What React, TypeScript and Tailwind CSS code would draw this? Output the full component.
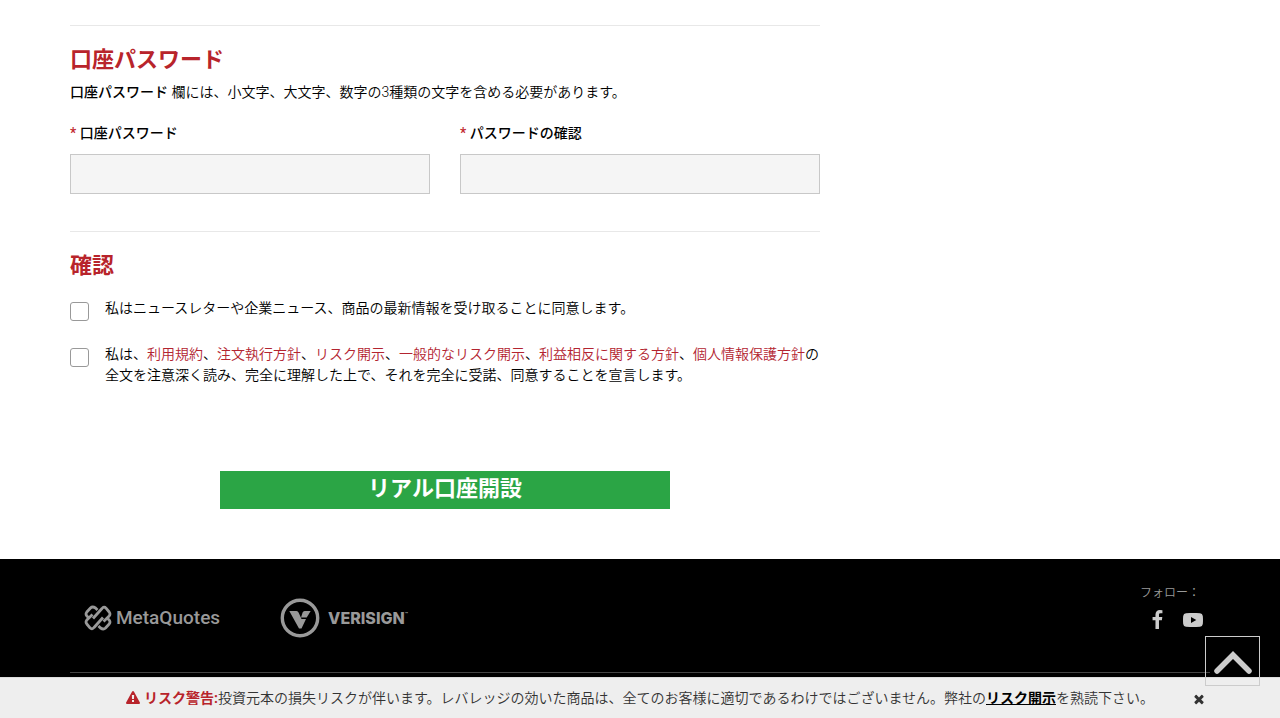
import React from "react";

function Field({ id, label }: { id: string; label: string }) {
  return (
    <div className="flex flex-1 flex-col gap-[10px]">
      <label htmlFor={id} className="font-medium">
        <span className="text-[#c1272d]">*</span> {label}
      </label>
      <input
        id={id}
        type="password"
        className="h-10 w-full border border-[#c8c8c8] bg-[#f5f5f5] px-3 outline-none"
      />
    </div>
  );
}

function Consent({ id, children }: { id: string; children: React.ReactNode }) {
  return (
    <div className="flex items-start gap-4">
      <input
        id={id}
        type="checkbox"
        className="mt-1 size-[19px] shrink-0 appearance-none rounded-[3px] border border-[#999] bg-white checked:bg-[#c1272d]"
      />
      <label htmlFor={id}>{children}</label>
    </div>
  );
}

function TermLink({ children }: { children: React.ReactNode }) {
  return (
    <a href="#" className="text-[#b32430]">
      {children}
    </a>
  );
}

function MetaQuotesLogo() {
  return (
    <a href="#" aria-label="MetaQuotes" className="flex items-center gap-1 text-[#999]">
      <svg viewBox="0 0 28 28" className="size-7" fill="none" stroke="currentColor" strokeWidth="2.8" strokeLinejoin="round">
        <path d="M9 14.500 L18 4.500 Q20 2 22 4.200 L25.200 8 Q26.700 10 25.200 12 L19.500 17.500" />
        <path d="M19 13.500 L10 23.500 Q8 26 6 23.800 L2.800 20 Q1.300 18 2.800 16 L8.500 10.500" />
        <path d="M13.500 6 L11.500 4 Q8.500 2 6.500 4 L2.800 8 Q1.300 10 2.800 12 L4.500 13.500" />
        <path d="M14.500 22 L16.500 24 Q19.500 26 21.500 24 L25.200 20 Q26.700 18 25.200 16 L23.500 14.500" />
      </svg>
      <span className="font-[Roboto,sans-serif] text-[19px] leading-7 font-medium">MetaQuotes</span>
    </a>
  );
}

function VerisignLogo() {
  return (
    <a href="#" aria-label="Verisign" className="flex items-center gap-2 text-[#999]">
      <svg viewBox="0 0 40 40" className="size-10" fill="currentColor">
        <circle cx="20" cy="20" r="17.700" fill="none" stroke="currentColor" strokeWidth="3.400" />
        <path d="M9.300 13h7.200q1.500 0 2.200 1.800L21.500 21H26l-4.500 9.500H19z" />
        <path d="M21 19.500l1.500-4.800q.6-1.700 2.200-1.700h6l-4 6.500z" />
      </svg>
      <span className="flex items-start font-[Inter,sans-serif] text-[16px] leading-5 font-extrabold">
        VERISIGN<span className="text-[5px] leading-3">™</span>
      </span>
    </a>
  );
}

export default function App() {
  return (
    <div className="min-h-screen bg-white font-[Roboto,'Noto_Sans_CJK_JP',sans-serif] text-[14px] leading-[21px] font-[350] text-black">
      <main className="mx-auto max-w-[1140px] pt-[25px] pb-[50px]">
        <form className="max-w-[750px]">
          <section className="border-t border-[#e8e8e8] pt-[22px] pb-[37px]">
            <h2 className="text-[22px] leading-6 font-bold text-[#b8242b]">口座パスワード</h2>
            <p className="mt-[10px]">
              <strong className="font-medium">口座パスワード</strong> 欄には、小文字、大文字、数字の3種類の文字を含める必要があります。
            </p>
            <div className="mt-5 flex gap-[30px]">
              <Field id="password" label="口座パスワード" />
              <Field id="password-confirm" label="パスワードの確認" />
            </div>
          </section>
          <section className="border-t border-[#e8e8e8] pt-[22px]">
            <h2 className="text-[22px] leading-6 font-bold text-[#b8242b]">確認</h2>
            <div className="mt-5 flex flex-col gap-[23px]">
              <Consent id="newsletter">私はニュースレターや企業ニュース、商品の最新情報を受け取ることに同意します。</Consent>
              <Consent id="terms">
                私は、<TermLink>利用規約</TermLink>、<TermLink>注文執行方針</TermLink>、<TermLink>リスク開示</TermLink>、
                <TermLink>一般的なリスク開示</TermLink>、<TermLink>利益相反に関する方針</TermLink>、
                <TermLink>個人情報保護方針</TermLink>の全文を注意深く読み、完全に理解した上で、それを完全に受諾、同意することを宣言します。
              </Consent>
            </div>
          </section>
          <button
            type="submit"
            className="mx-auto mt-[85px] block h-[38px] w-3/5 bg-[#2ba545] pb-0.5 text-[22px] leading-9 font-bold text-white"
          >
            リアル口座開設
          </button>
        </form>
      </main>

      <footer className="bg-black pb-[46px]">
        <div className="mx-auto flex h-[114px] max-w-[1140px] items-start justify-between border-b border-[#444] pt-6">
          <div className="flex items-center gap-[60px] pt-[15px] pl-[14px]">
            <MetaQuotesLogo />
            <VerisignLogo />
          </div>
          <div className="flex flex-col gap-[7px] pr-[7px] text-[#999]">
            <span className="text-[12px] leading-5">フォロー：</span>
            <div className="flex items-center gap-5 pl-3 text-[#ccc]">
              <a href="#" aria-label="Facebook">
                <svg viewBox="479 0 864 1664" className="h-[19px] w-[11px]" fill="currentColor">
                  <path d="M1343 12v264h-157q-86 0-116 36t-30 108v189h293l-39 296h-254v759h-306v-759h-255v-296h255v-218q0-186 104-288.5t277-102.5q147 0 228 12z" />
                </svg>
              </a>
              <a href="#" aria-label="YouTube">
                <svg viewBox="0 0 20 14" className="h-[14px] w-5" fill="currentColor">
                  <path fillRule="evenodd" d="M3 .2Q10-.3 17 .2 19.500.400 19.800 3q.4 4 0 8-.3 2.600-2.800 2.800-7 .5-14 0Q.500 13.600.200 11q-.4-4 0-8Q.500.400 3 .2zM8 4v6l5.300-3z" />
                </svg>
              </a>
            </div>
          </div>
        </div>
      </footer>

      <aside className="fixed inset-x-0 bottom-0 flex h-[41px] items-center justify-center border-t border-[#ddd] bg-[#eee] text-[#333]">
        <p>
          <svg viewBox="0 0 1792 1792" className="mr-1 inline size-[14px] align-[-2px] text-[#b8242b]" fill="currentColor" aria-hidden="true">
            <path d="M1024 1375v-190q0-14-9.5-23.5t-22.5-9.5h-192q-13 0-22.5 9.5t-9.5 23.5v190q0 14 9.5 23.5t22.5 9.5h192q13 0 22.5-9.5t9.5-23.5zm-2-374l18-459q0-12-10-19-13-11-24-11h-220q-11 0-24 11-10 7-10 21l17 457q0 10 10 16.5t24 6.5h185q14 0 23.5-6.5t10.5-16.5zm-14-934l768 1408q35 63-2 126-17 29-46.5 46t-63.5 17h-1536q-34 0-63.5-17t-46.5-46q-37-63-2-126l768-1408q17-31 47-49t65-18 65 18 47 49z" />
          </svg>
          <strong className="font-bold text-[#b8242b]">リスク警告:</strong>
          投資元本の損失リスクが伴います。レバレッジの効いた商品は、全てのお客様に適切であるわけではございません。弊社の
          <a href="#" className="font-bold text-black underline">リスク開示</a>を熟読下さい。
        </p>
        <button type="button" aria-label="閉じる" className="absolute top-[14px] right-[74px]">
          <svg viewBox="0 0 1792 1792" className="size-[14px]" fill="currentColor">
            <path d="M1490 1322q0 40-28 68l-136 136q-28 28-68 28t-68-28l-294-294-294 294q-28 28-68 28t-68-28l-136-136q-28-28-28-68t28-68l294-294-294-294q-28-28-28-68t28-68l136-136q28-28 68-28t68 28l294 294 294-294q28-28 68-28t68 28l136 136q28 28 28 68t-28 68l-294 294 294 294q28 28 28 68z" />
          </svg>
        </button>
      </aside>

      <button
        type="button"
        aria-label="トップへ戻る"
        className="fixed right-5 bottom-8 flex h-[50px] w-[55px] items-center justify-center border border-[#ccc] text-[#ccc]"
      >
        <svg viewBox="0 0 40 28" className="h-7 w-10" fill="none" stroke="currentColor" strokeWidth="5.500">
          <path d="M4 24 L20 8 L36 24" strokeLinecap="round" />
        </svg>
      </button>
    </div>
  );
}
